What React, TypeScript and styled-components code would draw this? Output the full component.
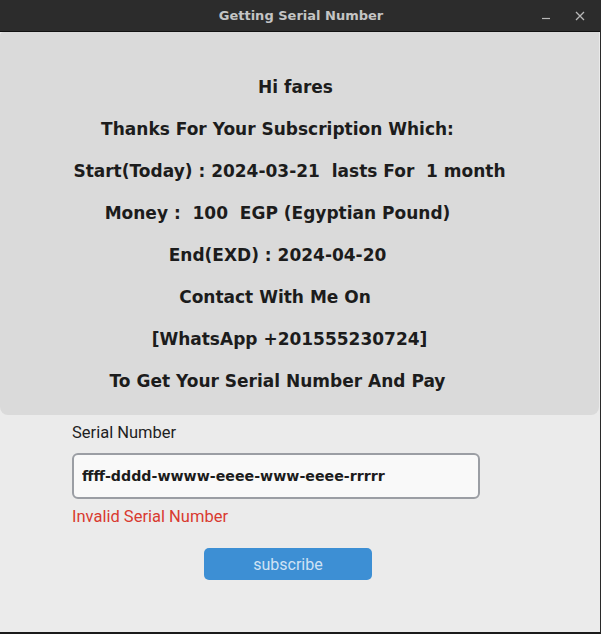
import React from "react";
import styled, { createGlobalStyle } from "styled-components";

const Global = createGlobalStyle`
  html, body { margin: 0; padding: 0; background: #ebebeb; }
  * { box-sizing: border-box; }
`;

const Window = styled.div`
  width: 601px;
  height: 634px;
  display: flex;
  flex-direction: column;
  background: #ebebeb;
  border-right: 1px solid #2a2a2a;
  border-bottom: 2px solid #1a1a1a;
  overflow: hidden;
`;

const TitleBar = styled.div`
  position: relative;
  height: 32px;
  flex: 0 0 32px;
  background: #2c2c2c;
  border-bottom: 1px solid #111;
  display: flex;
  align-items: center;
  justify-content: center;
`;

const Title = styled.div`
  font-family: "DejaVu Sans", sans-serif;
  font-weight: bold;
  font-size: 13px;
  color: #c4c4c4;
  margin-left: 2px;
`;

const Controls = styled.div`
  position: absolute;
  right: 15px;
  top: 0;
  height: 31px;
  display: flex;
  align-items: center;
  gap: 24px;
`;

const Notice = styled.div`
  margin-right: 1px;
  background: #dadada;
  border-radius: 4px 0 8px 8px;
  padding: 34px 0 13px;
  display: flex;
  flex-direction: column;
`;

const Line = styled.div<{ $shift: number }>`
  font-family: "DejaVu Sans", sans-serif;
  font-weight: bold;
  font-size: 17px;
  line-height: 42px;
  color: #1c1c1c;
  text-align: center;
  white-space: pre;
  padding-right: ${(p) => p.$shift}px;
`;

const Form = styled.div`
  padding: 8px 0 0 72px;
  display: flex;
  flex-direction: column;
`;

const Label = styled.label`
  font-family: Roboto, sans-serif;
  font-size: 16.5px;
  line-height: 20px;
  color: #1f1f1f;
`;

const Input = styled.input`
  margin-top: 10px;
  width: 408px;
  height: 46px;
  border: 2px solid #9b9ea4;
  border-radius: 6px;
  background: #f9f9f9;
  padding: 0 8px;
  font-family: "DejaVu Sans", sans-serif;
  font-weight: bold;
  font-size: 14.2px;
  color: #1c1c1c;
  outline: none;
`;

const ErrorText = styled.div`
  margin-top: 8px;
  font-family: Roboto, sans-serif;
  font-size: 16.5px;
  line-height: 20px;
  color: #d93a30;
`;

const Button = styled.button`
  margin: 21px 0 0 132px;
  width: 168px;
  height: 32px;
  border: none;
  border-radius: 5px;
  background: #3d8fd4;
  color: #cfe2f4;
  font-family: Roboto, sans-serif;
  font-size: 16px;
  cursor: pointer;
`;

const lines: [string, number][] = [
  ["Hi fares", 8],
  ["Thanks For Your Subscription Which:", 44],
  ["Start(Today) : 2024-03-21  lasts For  1 month", 20],
  ["Money :  100  EGP (Egyptian Pound)", 44],
  ["End(EXD) : 2024-04-20", 44],
  ["Contact With Me On", 49],
  ["[WhatsApp +201555230724]", 20],
  ["To Get Your Serial Number And Pay", 44],
];

export default function App() {
  return (
    <>
      <Global />
      <Window>
        <TitleBar>
          <Title>Getting Serial Number</Title>
          <Controls>
            <svg width="10" height="10" viewBox="0 0 10 10">
              <line x1="1" y1="7.5" x2="9" y2="7.5" stroke="#b8b8b8" strokeWidth="1.2" />
            </svg>
            <svg width="10" height="10" viewBox="0 0 10 10">
              <path d="M1 1 L9 9 M9 1 L1 9" stroke="#b8b8b8" strokeWidth="1.3" />
            </svg>
          </Controls>
        </TitleBar>
        <Notice>
          {lines.map(([t, s]) => (
            <Line key={t} $shift={s}>
              {t}
            </Line>
          ))}
        </Notice>
        <Form>
          <Label>Serial Number</Label>
          <Input defaultValue="ffff-dddd-wwww-eeee-www-eeee-rrrrr" />
          <ErrorText>Invalid Serial Number</ErrorText>
          <Button>subscribe</Button>
        </Form>
      </Window>
    </>
  );
}
